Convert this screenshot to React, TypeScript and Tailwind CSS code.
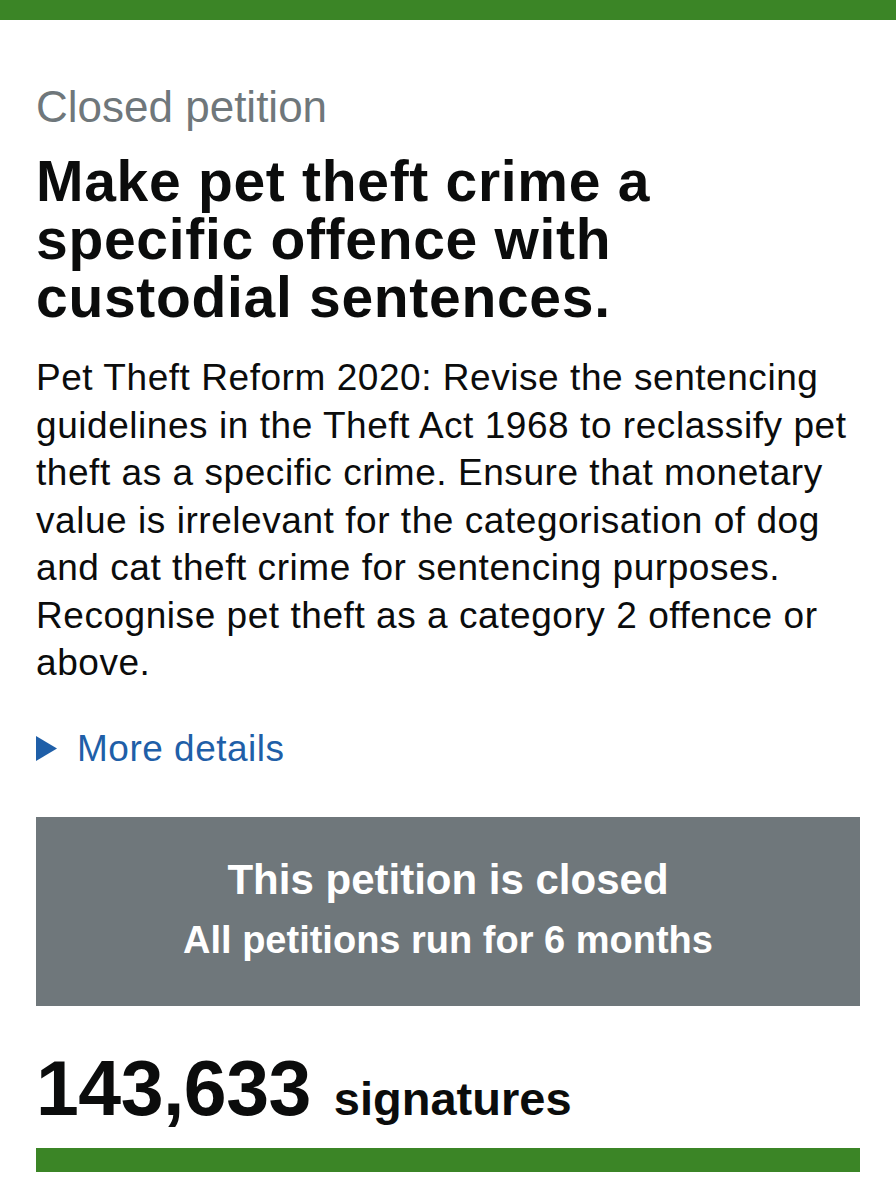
import React from "react";

const bodyLines = [
  "Pet Theft Reform 2020: Revise the sentencing",
  "guidelines in the Theft Act 1968 to reclassify pet",
  "theft as a specific crime. Ensure that monetary",
  "value is irrelevant for the categorisation of dog",
  "and cat theft crime for sentencing purposes.",
  "Recognise pet theft as a category 2 offence or",
  "above.",
];

const titleLines = [
  "Make pet theft crime a",
  "specific offence with",
  "custodial sentences.",
];

export default function App() {
  return (
    <div
      className="w-[896px] min-h-[1200px] bg-white text-[#0b0c0c]"
      style={{ fontFamily: '"Liberation Sans", Arial, Helvetica, sans-serif' }}
    >
      <div className="h-[20px] w-full bg-[#3b8526]" />
      <div className="px-[36px] pt-[62px]">
        <p className="text-[44px] leading-[50px] text-[#6f777b]">Closed petition</p>
        <h1 className="mt-[20px] text-[57px] leading-[58px] font-bold tracking-[0.7px]">
          {titleLines.map((l) => (
            <span key={l} className="block whitespace-nowrap">
              {l}
            </span>
          ))}
        </h1>
        <p className="mt-[28px] text-[37px] leading-[47.5px] tracking-[0.55px]">
          {bodyLines.map((l) => (
            <span key={l} className="block whitespace-nowrap">
              {l}
            </span>
          ))}
        </p>
        <div className="mt-[38px] flex items-center gap-[20px] text-[#1f5fa8]">
          <svg width="21" height="25" viewBox="0 0 21 25" className="shrink-0">
            <polygon points="0,0 21,12.5 0,25" fill="#1f5fa8" />
          </svg>
          <span className="text-[37px] leading-[47.5px] tracking-[0.5px]">More details</span>
        </div>
        <div className="mt-[45px] bg-[#6f777b] pt-[39px] pb-[44px] text-center text-white font-bold">
          <p className="text-[42px] leading-[48px]">This petition is closed</p>
          <p className="mt-[14px] text-[38px] leading-[44px]">All petitions run for 6 months</p>
        </div>
        <div className="mt-[42px] flex items-baseline gap-[23px] font-bold">
          <span className="text-[77px] leading-[80px] tracking-[-0.5px]">143,633</span>
          <span className="text-[47px] leading-[50px]">signatures</span>
        </div>
        <div className="mt-[20px] h-[24px] w-full bg-[#3b8526]" />
      </div>
    </div>
  );
}
